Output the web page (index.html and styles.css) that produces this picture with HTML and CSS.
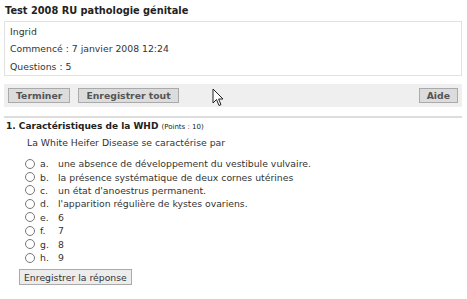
FILE: index.html
```html
<!DOCTYPE html>
<html lang="fr">
<head>
  <meta charset="UTF-8">
  <title>Test 2008 RU pathologie génitale</title>
  <link rel="stylesheet" href="styles.css">
</head>
<body>
<h1>Test 2008 RU pathologie génitale</h1>

<div class="info">
  <div>Ingrid</div>
  <div>Commencé : 7 janvier 2008 12:24</div>
  <div>Questions : 5</div>
</div>

<div class="toolbar">
  <button class="tb-btn">Terminer</button>
  <button class="tb-btn">Enregistrer tout</button>
  <span class="spacer"></span>
  <button class="tb-btn">Aide</button>
  <svg class="cursor" width="12" height="19" viewBox="0 0 12 19">
    <path d="M1 1 L1 15 L4.5 11.5 L7 17.5 L9 16.6 L6.6 11 L11 11 Z" fill="#fff" stroke="#222" stroke-width="1"/>
  </svg>
</div>

<div class="question">
  <h2>1. Caractéristiques de la WHD <small>(Points : 10)</small></h2>
  <p class="stem">La White Heifer Disease se caractérise par</p>

  <ul class="answers">
    <li><input type="radio" name="q1"><span class="letter">a.</span>une absence de développement du vestibule vulvaire.</li>
    <li><input type="radio" name="q1"><span class="letter">b.</span>la présence systématique de deux cornes utérines</li>
    <li><input type="radio" name="q1"><span class="letter">c.</span>un état d'anoestrus permanent.</li>
    <li><input type="radio" name="q1"><span class="letter">d.</span>l'apparition régulière de kystes ovariens.</li>
    <li><input type="radio" name="q1"><span class="letter">e.</span>6</li>
    <li><input type="radio" name="q1"><span class="letter">f.</span>7</li>
    <li><input type="radio" name="q1"><span class="letter">g.</span>8</li>
    <li><input type="radio" name="q1"><span class="letter">h.</span>9</li>
  </ul>

  <button class="save-btn">Enregistrer la réponse</button>
</div>
</body>
</html>
```

FILE: styles.css
```css
* {
  box-sizing: border-box;
  margin: 0;
  padding: 0;
}

body {
  font-family: "DejaVu Sans", Verdana, sans-serif;
  font-size: 9.3px;
  color: #333;
  background: #fff;
  padding: 4px 5px 0 4px;
}

h1 {
  font-size: 9.8px;
  font-weight: bold;
  color: #222;
  padding-left: 1px;
  line-height: 13px;
  margin-bottom: 4px;
}

.info {
  border: 1px solid #e2e2e2;
  padding: 1px 5px 0;
  line-height: 17.3px;
}

.toolbar {
  position: relative;
  display: flex;
  align-items: center;
  gap: 8px;
  margin-top: 8px;
  padding: 4px 4px;
  height: 23px;
  background: #efefef;
}

.spacer {
  flex: 1;
}

.tb-btn {
  font-family: inherit;
  font-size: 9.3px;
  font-weight: bold;
  color: #555;
  background: #dcdcdc;
  border: 1px solid #aaa;
  padding: 0 7px;
  height: 15px;
}

.cursor {
  position: absolute;
  left: 208px;
  top: 4px;
}

.question {
  margin-top: 9px;
  border-top: 2px solid #ddd;
  padding-top: 1px;
}

h2 {
  font-size: 9px;
  font-weight: bold;
  color: #222;
  padding-left: 2px;
  line-height: 14px;
}

h2 small {
  font-size: 7px;
  font-weight: normal;
}

.stem {
  margin: 2px 0 7px 23px;
  line-height: 14px;
}

.answers {
  list-style: none;
  margin-left: 21px;
}

.answers li {
  display: flex;
  align-items: center;
  height: 13.43px;
}

.answers input {
  width: 10px;
  height: 10px;
  margin: 0 5px 0 0;
}

.letter {
  width: 18px;
}

.save-btn {
  font-family: inherit;
  font-size: 9.3px;
  color: #333;
  background: #ececec;
  border: 1px solid #aaa;
  margin: 5px 0 0 15px;
  padding: 0 4px;
  height: 16px;
}
```
